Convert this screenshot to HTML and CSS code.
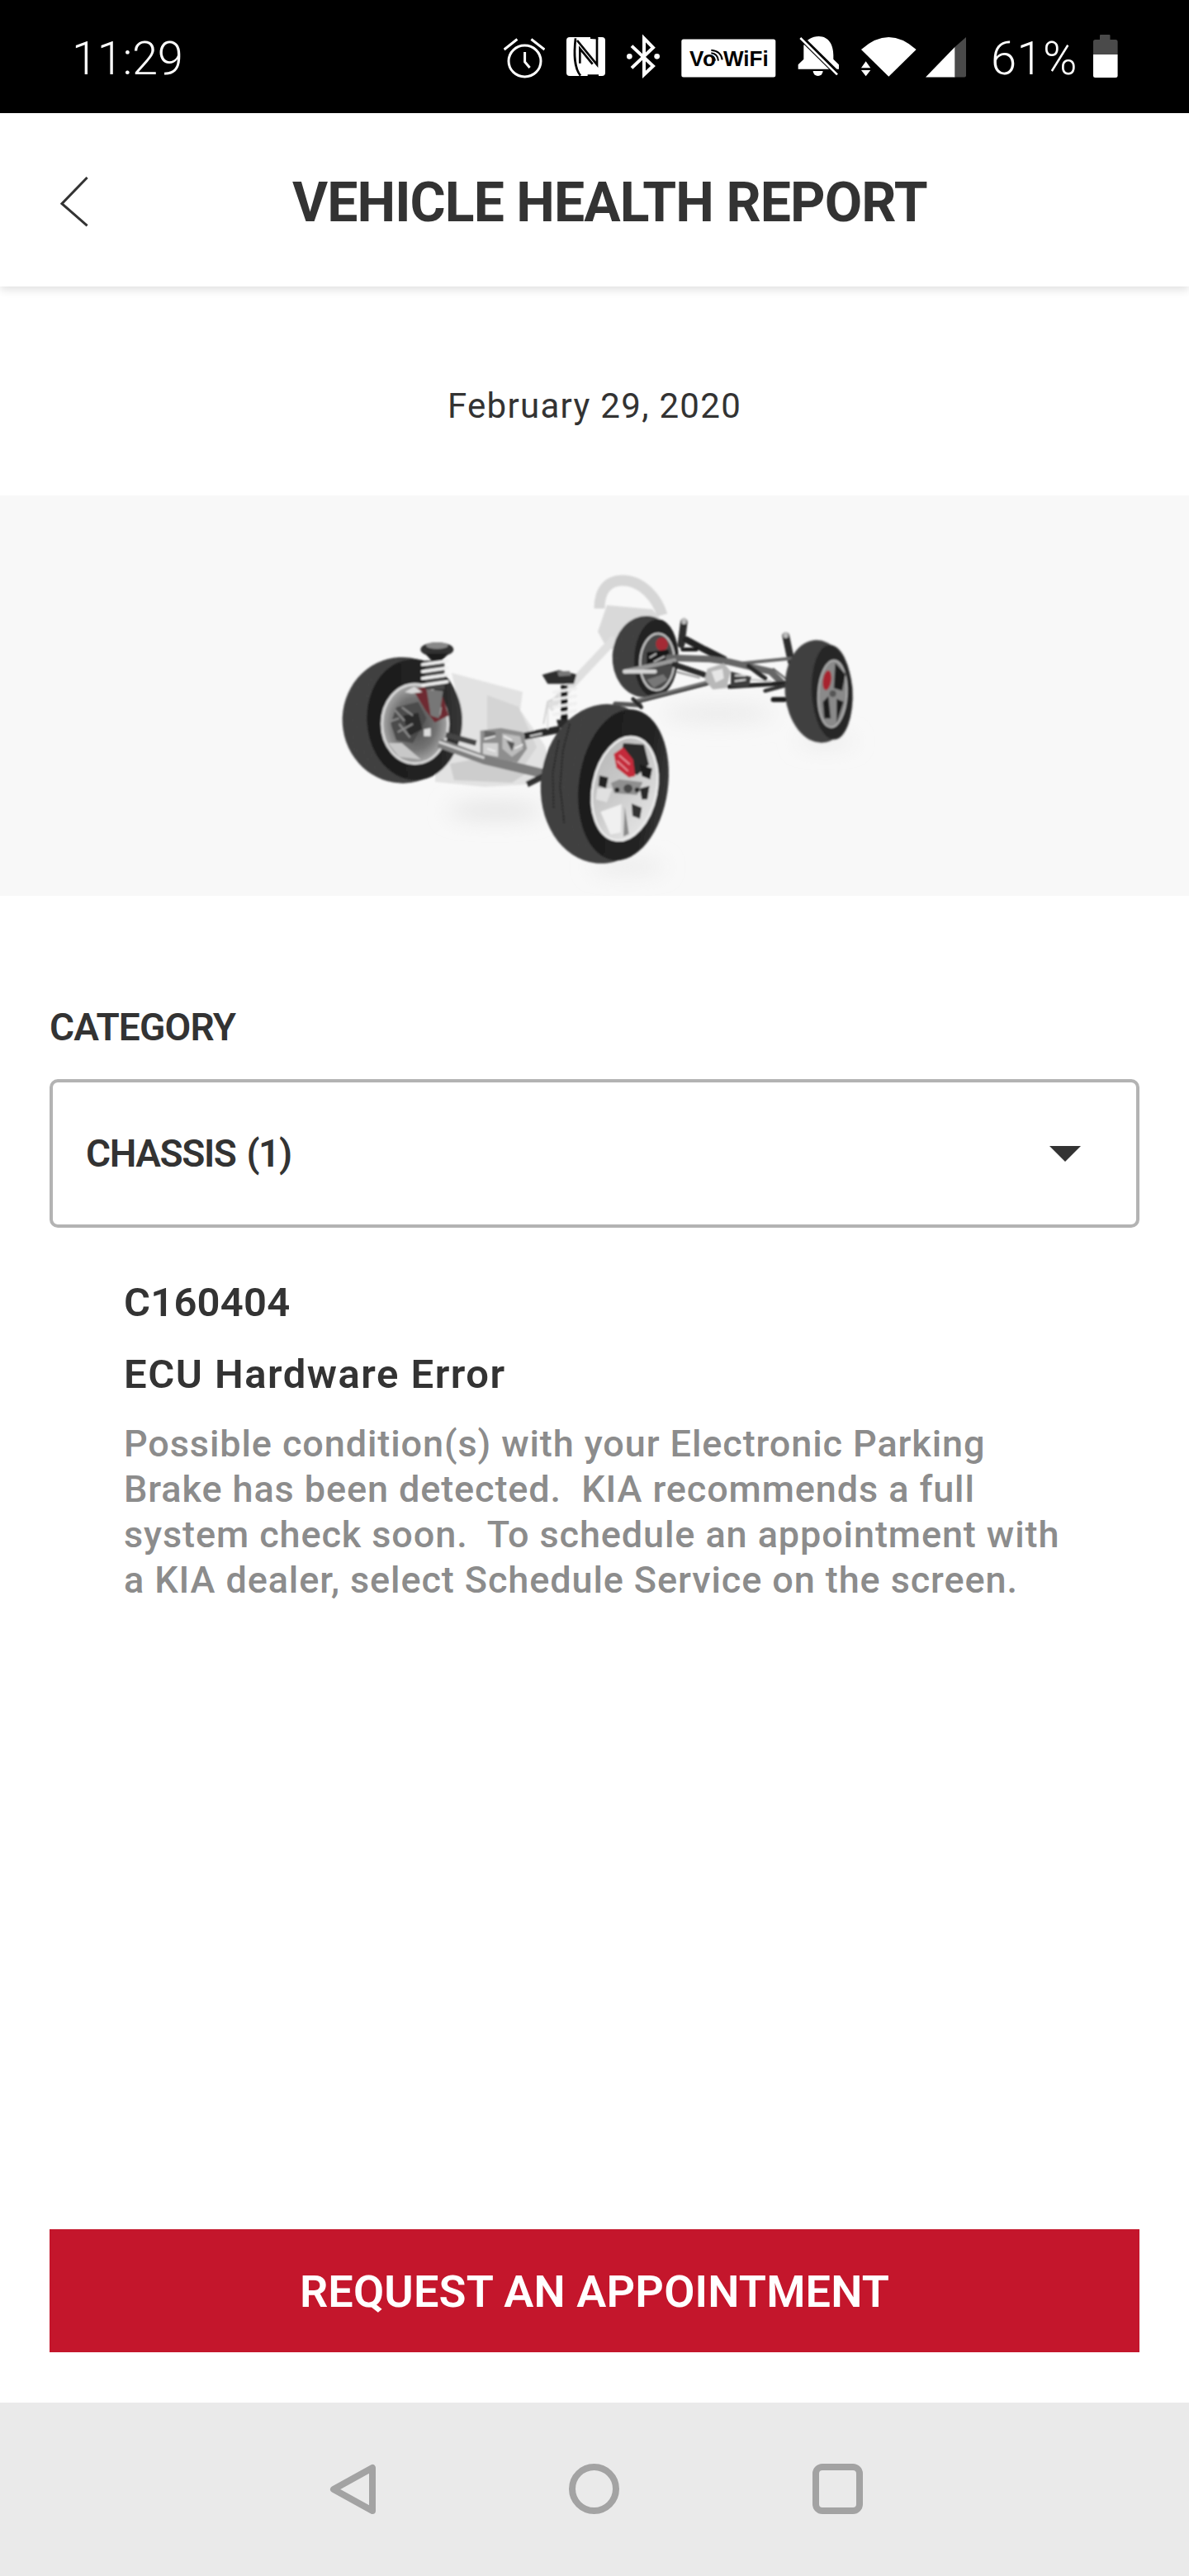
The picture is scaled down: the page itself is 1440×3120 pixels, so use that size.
FILE: index.html
```html
<!DOCTYPE html>
<html lang="en">
<head>
<meta charset="utf-8">
<title>Vehicle Health Report</title>
<link rel="stylesheet" href="styles.css">
</head>
<body>
<div class="screen">
  <div class="statusbar">
    <span class="clock">11:29</span>
    <div class="status-icons">
      <svg class="ico" width="50" height="56" viewBox="608 40 50 56" fill="none" stroke="#fff" stroke-width="3">
        <ellipse cx="633.5" cy="74" rx="19.5" ry="19"/>
        <path d="M633.6 63V75L639.6 82M608.6 60L624.4 47.5M641.4 47.5L657.5 60"/>
      </svg>
      <svg class="ico" width="47" height="56" viewBox="687 40 47 56">
        <rect x="687" y="45" width="47" height="47" rx="4" fill="#fff"/>
        <g transform="translate(680 35) scale(.3333)" fill="none" stroke="#000" stroke-width="8">
          <path d="M54 34C48 90 48 140 72 170"/>
          <path d="M60 42L132 130V34"/>
          <path d="M70 125V72L116 128"/>
          <path d="M108 32C124 32 134 34 136 34M98 170H138"/>
        </g>
      </svg>
      <svg class="ico" width="40" height="56" viewBox="760 40 40 56">
        <g transform="translate(680 35) scale(.3333)">
          <path d="M258 62L336 135L303 166V34L336 68L258 142" fill="none" stroke="#fff" stroke-width="12"/>
          <circle cx="250" cy="100" r="10" fill="#fff"/>
          <circle cx="350" cy="100" r="10" fill="#fff"/>
        </g>
      </svg>
      <svg class="ico" width="115" height="56" viewBox="825 40 115 56">
        <rect x="825.3" y="47.5" width="114" height="46" rx="2.5" fill="#fff"/>
        <text class="vowifi" x="835" y="80">V</text>
        <text class="vowifi" x="851" y="80">o</text>
        <text class="vowifi" x="876" y="80">WiFi</text>
        <g transform="translate(820 35) scale(.3333)" fill="none" stroke="#000" stroke-width="6">
          <path d="M123 100Q136 100 138 116M124 88Q148 90 150 116M124 77Q160 80 164 112"/>
        </g>
      </svg>
      <svg class="ico" width="50" height="56" viewBox="966 40 50 56">
        <g transform="translate(820 35) scale(.3333)">
          <path d="M515 27C552 27 568 60 568 95V110L588 130V146H440V130L460 110V60C470 40 490 27 515 27Z" fill="#fff"/>
          <path d="M494 153A18 18 0 0 0 530 153Z" fill="#fff"/>
          <path d="M440 22L590 170" stroke="#000" stroke-width="20"/>
          <path d="M448 33L582 166" stroke="#fff" stroke-width="8"/>
        </g>
      </svg>
      <svg class="ico ico-tight" width="68" height="56" viewBox="1043 40 68 56" fill="#fff">
        <g transform="translate(820 35) scale(.3333)">
          <path d="M772 173L672 75Q772-15 872 75Z"/>
          <path d="M672 142H706L689 118ZM672 150H706L689 172Z"/>
        </g>
      </svg>
      <svg class="ico ico-signal" width="49" height="56" viewBox="1122 40 49 56">
        <path d="M1122 93.5L1157.6 56.7V93.5Z" fill="#fff"/>
        <path d="M1157.6 56.7L1171 45V91.5Q1171 93.5 1169 93.5H1157.6Z" fill="#4a4a4a"/>
      </svg>
      <span class="battery-pct">61%</span>
      <svg class="ico" width="30" height="56" viewBox="1324 40 30 56">
        <path d="M1332 48V43Q1332 42 1333 42H1343.5Q1344.5 42 1344.5 43V48H1351Q1353.6 48 1353.6 50.500V66H1324V50.500Q1324 48 1326.500 48Z" fill="#4a4a4a"/>
        <path d="M1324 66H1353.6V91.500Q1353.6 94 1351 94H1326.500Q1324 94 1324 91.500Z" fill="#fff"/>
      </svg>
    </div>
  </div>

  <header class="topbar">
    <svg class="back" width="34" height="62" viewBox="73 213 34 62" fill="none" stroke="#333" stroke-width="3">
      <path d="M105.600 215L75 246.700L105.600 273.300"/>
    </svg>
    <h1 class="title">VEHICLE HEALTH REPORT</h1>
  </header>

  <div class="date-row">February 29, 2020</div>

  <div class="hero">
    <svg class="chassis" width="1440" height="485" viewBox="0 600 1440 485">
      <defs>
        <filter id="soft" x="-5%" y="-5%" width="110%" height="110%"><feGaussianBlur stdDeviation="0.8"/></filter>
        <filter id="shadow" x="-30%" y="-60%" width="160%" height="220%"><feGaussianBlur stdDeviation="13"/></filter>
        <pattern id="tread" width="9" height="7" patternUnits="userSpaceOnUse">
          <rect width="9" height="7" fill="#4c4c4c"/>
          <path d="M0 1.500H5M4 5H9" stroke="#1b1b1b" stroke-width="1.500"/>
          <path d="M2 1.500V5" stroke="#262626" stroke-width="1"/>
        </pattern>
        <linearGradient id="side" x1="0" x2="1" y1="0" y2="0">
          <stop offset="0" stop-color="#1c1c1c"/><stop offset=".75" stop-color="#232323"/><stop offset="1" stop-color="#383838"/>
        </linearGradient>
        <radialGradient id="hubLeft"><stop offset="0" stop-color="#4a4a4a"/><stop offset=".65" stop-color="#737373"/><stop offset="1" stop-color="#a8a8a8"/></radialGradient>
        <linearGradient id="rimFront" x1="0" x2="1" y1="0" y2="1"><stop offset="0" stop-color="#b4b4b4"/><stop offset=".5" stop-color="#cccccc"/><stop offset="1" stop-color="#ebebeb"/></linearGradient>
      </defs>

      <g filter="url(#shadow)" fill="#dedede">
        <ellipse cx="600" cy="982" rx="58" ry="8"/>
        <ellipse cx="870" cy="864" rx="68" ry="10" fill="#e8e8e8"/>
        <ellipse cx="760" cy="1050" rx="46" ry="5"/>
        <ellipse cx="1000" cy="898" rx="36" ry="4"/>
      </g>

      <g filter="url(#soft)">
        <!-- steering wheel ghost -->
        <path d="M726 737C726 712 738 703 754 703C778 703 796 725 802 745" fill="none" stroke="#d6d6d6" stroke-width="13"/>
        <path d="M735 733L790 738L800 750L760 790L735 785L724 765Z" fill="#d9d9d9"/>
        <path d="M745 773L665 858" stroke="#dfdfdf" stroke-width="10"/>

        <!-- rear left wheel -->
        <g transform="translate(720 690) scale(.3333)">
          <ellipse cx="185" cy="316" rx="120" ry="148" transform="rotate(3 185 316)" fill="url(#tread)"/>
          <ellipse cx="224" cy="322" rx="80" ry="142" transform="rotate(3 224 322)" fill="#242424"/>
          <ellipse cx="228" cy="335" rx="62" ry="103" fill="#4a4a4a" stroke="#c8c8c8" stroke-width="7" transform="rotate(3 228 335)"/>
          <ellipse cx="245" cy="270" rx="22" ry="24" fill="#a52a35"/>
          <path d="M190 300L270 290L275 345L190 355Z" fill="#151515"/>
          <path d="M200 320L225 305M215 335L255 315" stroke="#bbb" stroke-width="6"/>
          <path d="M190 400L250 380L265 400L215 430Z" fill="#777"/>
        </g>

        <!-- rear suspension -->
        <g transform="translate(720 690) scale(.3333)" fill="none" stroke-linecap="round">
          <path d="M325 190L315 272" stroke="#2d2d2d" stroke-width="26"/>
          <path d="M325 190V184" stroke="#bbb" stroke-width="18"/>
          <path d="M695 240L715 335" stroke="#2d2d2d" stroke-width="26"/>
          <path d="M695 240V236" stroke="#bbb" stroke-width="18"/>
          <path d="M335 255L400 290L470 325" stroke="#222" stroke-width="24"/>
          <path d="M320 290H370" stroke="#1c1c1c" stroke-width="14"/>
          <path d="M270 320L420 325L490 335L640 370L680 410" stroke="#666" stroke-width="24"/>
          <path d="M110 370L290 330" stroke="#9a9a9a" stroke-width="16"/>
          <path d="M110 370H220" stroke="#d6d6d6" stroke-width="14"/>
          <path d="M290 345L410 385" stroke="#2a2a2a" stroke-width="20"/>
          <path d="M300 372L380 392" stroke="#999" stroke-width="7"/>
          <path d="M540 340L720 322" stroke="#666" stroke-width="12"/>
          <path d="M490 425L700 412" stroke="#222" stroke-width="16"/>
          <path d="M500 395L640 405" stroke="#ccc" stroke-width="8"/>
          <path d="M560 350L620 395" stroke="#2a2a2a" stroke-width="16"/>
          <path d="M650 360L700 400" stroke="#555" stroke-width="6"/>
          <path d="M620 440L695 420" stroke="#333" stroke-width="14"/>
          <path d="M650 472H690" stroke="#1c1c1c" stroke-width="18"/>
          <path d="M150 478L420 408" stroke="#6e6e6e" stroke-width="15"/>
          <path d="M150 485L420 415" stroke="#262626" stroke-width="6"/>
          <path d="M75 487L165 492" stroke="#555" stroke-width="16"/>
          <path d="M140 470L170 500" stroke="#2c2c2c" stroke-width="14"/>
        </g>
        <g transform="translate(720 690) scale(.3333)">
          <path d="M410 360L470 340L495 370L480 430L430 435L400 400Z" fill="#b8b8b8"/>
          <path d="M425 370L465 360L470 395L440 410Z" fill="#e6e6e6"/>
          <path d="M495 370L570 390L560 425L495 425Z" fill="#3e3e3e"/>
          <path d="M510 385L550 385M510 405L550 400" stroke="#ddd" stroke-width="6"/>
        </g>

        <!-- rear right wheel -->
        <g transform="translate(720 690) scale(.3333)">
          <ellipse cx="815" cy="442" rx="123" ry="187" transform="rotate(-5 815 442)" fill="url(#tread)"/>
          <ellipse cx="863" cy="445" rx="74" ry="172" transform="rotate(-3 863 445)" fill="#282828"/>
          <ellipse cx="865" cy="451" rx="52" ry="122" fill="#8a8a8a" stroke="#c0c0c0" stroke-width="5" transform="rotate(3 865 451)"/>
          <path d="M875 340L912 380L900 440L870 430ZM830 480L850 460L858 540L835 540ZM880 470L905 480L880 555Z" fill="#1e1e1e"/>
          <ellipse cx="845" cy="402" rx="15" ry="36" fill="#a7242f" transform="rotate(8 845 402)"/>
          <circle cx="866" cy="450" r="12" fill="#555"/>
        </g>

        <!-- engine ghost -->
        <path d="M547 815L633 838L630 860L660 903L665 920L640 950L587 953L527 947L527 933L557 860Z" fill="#e2e2e2"/>
        <path d="M590 842L628 856L650 905L630 935L600 925L590 890Z" fill="#d4d4d4"/>
        <path d="M545 925L600 915L640 935L620 948L550 945Z" fill="#cdcdcd"/>

        <!-- left wheel -->
        <g transform="translate(400 760) scale(.3333)">
          <ellipse cx="262" cy="337" rx="218" ry="229" transform="rotate(-3 262 337)" fill="url(#tread)"/>
          <ellipse cx="305" cy="335" rx="172" ry="220" transform="rotate(-3 305 335)" fill="url(#side)"/>
          <ellipse cx="308" cy="350" rx="120" ry="144" fill="url(#hubLeft)" stroke="#dadada" stroke-width="9"/>
          <path d="M240 290L320 270L350 330L300 420L240 410L220 350Z" fill="#4c4c4c"/>
          <path d="M265 320L320 310L335 370L285 395Z" fill="#2a2a2a"/>
          <path d="M235 300L270 340M245 380L300 350M260 290L300 320M250 350L290 400M220 340L250 330" stroke="#8a8a8a" stroke-width="7"/>
          <path d="M340 370L365 365L365 395L340 395Z" fill="#ddd"/>
          <path d="M210 420L250 470L330 480L260 420Z" fill="#c8c8c8"/>
          <path d="M300 225L345 215L410 255L430 320L380 345L345 300Z" fill="#6e2a30"/>
          <path d="M365 280L405 290L400 320L365 315Z" fill="#aaa"/>
          <path d="M270 235L305 215L335 235L295 240Z" fill="#d8d8d8"/>
        </g>

        <!-- steering rack and front axle -->
        <g transform="translate(400 760) scale(.3333)" fill="none">
          <path d="M395 420L560 480L770 530" stroke="#7e7e7e" stroke-width="34"/>
          <path d="M395 416L560 474" stroke="#d6d6d6" stroke-width="9"/>
          <path d="M420 390L530 420" stroke="#444" stroke-width="20"/>
          <path d="M705 395L835 370" stroke="#262626" stroke-width="26"/>
          <path d="M725 395L770 385" stroke="#ccc" stroke-width="7"/>
          <path d="M715 570L775 540" stroke="#333" stroke-width="22"/>
          <path d="M790 370V280" stroke="#dcdcdc" stroke-width="5"/>
          <path d="M775 350L790 270L830 250" stroke="#d2d2d2" stroke-width="6"/>
        </g>
        <g transform="translate(400 760) scale(.3333)">
          <path d="M545 375L620 365L700 380L715 440L680 490L620 480L545 460Z" fill="#8e8e8e"/>
          <path d="M555 420H610V470L555 460Z" fill="#d2d2d2"/>
          <path d="M625 385L690 395L700 440L660 470L625 440Z" fill="#bcbcbc"/>
          <path d="M640 410L670 420L660 450Z" fill="#555"/>
          <path d="M600 380L560 375V400H600Z" fill="#666"/>
          <path d="M560 405L600 395M630 395L660 410M670 440L700 425M570 440L600 450" stroke="#eee" stroke-width="6"/>
        </g>

        <!-- left strut -->
        <g transform="translate(400 760) scale(.3333)">
          <ellipse cx="388" cy="80" rx="60" ry="26" fill="#333"/>
          <ellipse cx="388" cy="66" rx="40" ry="12" fill="#888"/>
          <path d="M345 95L430 95L400 125H372Z" fill="#1c1c1c"/>
          <path d="M350 225L410 230L395 330L365 320Z" fill="#777"/>
          <path d="M345 120H415V225H345Z" fill="#4a4a4a"/>
          <path d="M335 135L425 122M335 160L425 147M335 185L425 172M335 210L425 197" stroke="#f2f2f2" stroke-width="11" stroke-linecap="round"/>
        </g>

        <!-- right strut -->
        <g transform="translate(400 760) scale(.3333)">
          <path d="M770 172L830 155L895 170L885 205L790 205Z" fill="#2e2e2e"/>
          <path d="M825 160L870 158L875 175L830 178Z" fill="#777"/>
          <path d="M838 210H862V345H838Z" fill="#141414"/>
          <path d="M812 235L892 222M812 262L892 249M812 289L892 276M812 316L892 303" stroke="#efefef" stroke-width="10" stroke-linecap="round"/>
          <path d="M822 335H875L865 365H830Z" fill="#2c2c2c"/>
        </g>

        <!-- front wheel -->
        <g transform="translate(640 840) scale(.3333)">
          <ellipse cx="275" cy="328" rx="230" ry="290" transform="rotate(6 275 328)" fill="url(#tread)"/>
          <path d="M150 110L125 210L115 340L130 470" fill="none" stroke="#1c1c1c" stroke-width="6" stroke-dasharray="7 5"/>
          <path d="M110 170L88 290L92 420" fill="none" stroke="#1c1c1c" stroke-width="6" stroke-dasharray="7 5"/>
          <ellipse cx="345" cy="332" rx="162" ry="276" transform="rotate(8 345 332)" fill="url(#side)"/>
          <ellipse cx="350" cy="346" rx="116" ry="190" transform="rotate(11 350 346)" fill="url(#rimFront)" stroke="#ededed" stroke-width="8"/>
          <path d="M345 180L420 185L438 258L395 296L325 268Z" fill="#2b2b2b"/>
          <path d="M405 258L450 272L442 312L412 300Z" fill="#1d1d1d"/>
          <path d="M258 298L290 305L282 345L254 335Z" fill="#232323"/>
          <path d="M405 345L440 335L432 385L412 385Z" fill="#2a2a2a"/>
          <path d="M375 400L412 415L405 455L378 445Z" fill="#333"/>
          <path d="M300 325L330 312L415 322L395 368L312 362Z" fill="#8f8f8f"/>
          <path d="M310 220L345 195L380 240L388 300L365 305L320 270Z" fill="#c42c3a"/>
          <path d="M330 225L368 258M322 245L362 282" stroke="#ec98a2" stroke-width="5"/>
          <circle cx="362" cy="345" r="16" fill="#4a4a4a"/>
          <circle cx="322" cy="350" r="9" fill="#262626"/>
          <circle cx="395" cy="350" r="9" fill="#262626"/>
          <path d="M262 430L338 402L335 505L298 512Z" fill="#f0f0f0"/>
          <path d="M350 410L365 510L345 520Z" fill="#8a8a8a"/>
          <path d="M250 345H305L285 395L245 385Z" fill="#e0e0e0"/>
        </g>
      </g>
    </svg>
  </div>

  <main class="content">
    <div class="label">CATEGORY</div>
    <div class="select">
      <span>CHASSIS (1)</span>
      <svg width="38" height="19" viewBox="0 0 38 19"><path d="M0 0H38L19 19Z" fill="#333"/></svg>
    </div>
    <section class="fault">
      <div class="code">C160404</div>
      <div class="name">ECU Hardware Error</div>
      <p class="desc">Possible condition(s) with your Electronic Parking<br>Brake has been detected.&nbsp; KIA recommends a full<br>system check soon.&nbsp; To schedule an appointment with<br>a KIA dealer, select Schedule Service on the screen.</p>
    </section>
  </main>

  <button class="cta" type="button">REQUEST AN APPOINTMENT</button>

  <nav class="navbar">
    <svg width="56" height="62" viewBox="399 2984 56 62" fill="none" stroke="#a3a3a3" stroke-width="8" stroke-linejoin="round"><path d="M404 3015L451 2989V3041Z"/></svg>
    <svg width="61" height="62" viewBox="689 2985 61 62" fill="none" stroke="#a3a3a3" stroke-width="8"><circle cx="719.500" cy="3015.500" r="26.500"/></svg>
    <svg width="61" height="62" viewBox="983 2985 61 62" fill="none" stroke="#a3a3a3" stroke-width="8"><rect x="987" y="2989" width="53" height="53" rx="8"/></svg>
  </nav>
</div>
</body>
</html>
```
FILE: styles.css
```css
* { box-sizing: border-box; }
html, body { margin: 0; padding: 0; background: #fff; }
body { font-family: Roboto, "Liberation Sans", sans-serif; color: #333; }
.screen { width: 1440px; height: 3120px; display: flex; flex-direction: column; overflow: hidden; background: #fff; }

.statusbar { flex: 0 0 137px; background: #000; color: #fff; display: flex; align-items: flex-start; padding: 40px 86px 0 87px; }
.clock { margin-top: 3px; font-weight: 300; font-size: 56px; line-height: 56px; letter-spacing: -.3px; }
.status-icons { margin-left: auto; display: flex; align-items: flex-start; gap: 26px; }
.ico { display: block; flex: none; }
.ico-signal { margin-left: -15px; }
.battery-pct { margin: 3px -7px 0 4px; font-weight: 300; font-size: 56px; line-height: 56px; letter-spacing: .5px; }
.vowifi { font-family: "Liberation Sans", sans-serif; font-weight: 700; font-size: 26px; fill: #000; }

.topbar { flex: 0 0 210px; position: relative; z-index: 1; background: #fff; display: flex; align-items: center; padding: 4px 0 0 73px; box-shadow: 0 4px 10px rgba(0, 0, 0, .12); }
.back { flex: none; display: block; }
.title { margin: 4px 0 0 247px; font-size: 66px; font-weight: 700; letter-spacing: -.9px; line-height: 80px; white-space: nowrap; color: #333; }

.date-row { flex: 0 0 253px; padding-top: 121px; text-align: center; font-size: 42px; line-height: 48px; letter-spacing: 1.300px; color: #333; }
.hero { flex: 0 0 485px; background: #f8f8f8; }
.chassis { display: block; }

.content { flex: 1 1 auto; padding: 136px 60px 0; }
.label { font-size: 46px; font-weight: 600; line-height: 47px; letter-spacing: -.8px; }
.select { margin-top: 39px; height: 180px; border: 4px solid #b3b3b3; border-radius: 10px; display: flex; align-items: center; justify-content: space-between; padding: 0 67px 0 40px; font-size: 46px; font-weight: 600; letter-spacing: -1.400px; word-spacing: 3px; }
.fault { padding-left: 90px; }
.code { margin-top: 66px; font-size: 49px; line-height: 50px; font-weight: 600; letter-spacing: .2px; }
.name { margin-top: 37px; font-size: 49px; line-height: 50px; font-weight: 600; letter-spacing: 1.500px; }
.desc { margin: 31px 0 0; font-size: 45px; line-height: 55px; font-weight: 500; letter-spacing: .9px; color: #8c8c8c; white-space: nowrap; }

.cta { flex: 0 0 149px; margin: 0 60px 61px; padding: 2px 0 0; border: 0; background: #c4162c; color: #fff; font-family: inherit; font-size: 54px; font-weight: 600; letter-spacing: .15px; }

.navbar { flex: 0 0 210px; background: #eaeaea; display: flex; align-items: center; padding-left: 399px; gap: 234px; }
.navbar svg { display: block; flex: none; }
```
